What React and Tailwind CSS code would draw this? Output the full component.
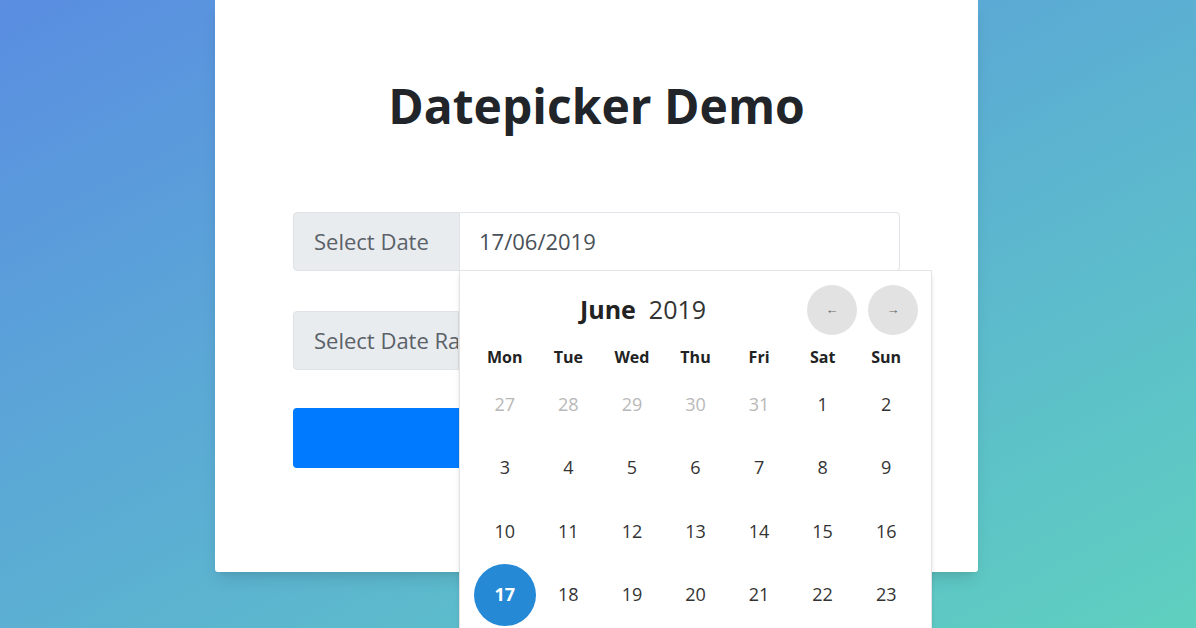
import React from 'react';

const weeks = [
  [
    { d: 27, muted: true },
    { d: 28, muted: true },
    { d: 29, muted: true },
    { d: 30, muted: true },
    { d: 31, muted: true },
    { d: 1 },
    { d: 2 },
  ],
  [3, 4, 5, 6, 7, 8, 9].map((d) => ({ d })),
  [10, 11, 12, 13, 14, 15, 16].map((d) => ({ d })),
  [17, 18, 19, 20, 21, 22, 23].map((d) => ({ d, selected: d === 17 })),
  [24, 25, 26, 27, 28, 29, 30].map((d) => ({ d })),
];

const weekdays = ['Mon', 'Tue', 'Wed', 'Thu', 'Fri', 'Sat', 'Sun'];

const Calendar = () => (
  <div className="absolute left-[166px] top-[58px] z-10 w-[473px] bg-white border border-[#e3e3e3] shadow-md px-[13px] pt-[14px] pb-4">
    {/* Header */}
    <div className="flex items-center">
      <div className="flex-1 flex items-center justify-center gap-[13px] text-[25px] text-[#333] pl-[6px]">
        <span className="font-bold text-[#222]">June</span>
        <span>2019</span>
      </div>
      <div className="flex gap-[11px]">
        <button className="w-[50px] h-[50px] rounded-full bg-[#e2e2e2] text-[#666] text-[13px] flex items-center justify-center">
          ←
        </button>
        <button className="w-[50px] h-[50px] rounded-full bg-[#e2e2e2] text-[#666] text-[13px] flex items-center justify-center">
          →
        </button>
      </div>
    </div>

    {/* Weekdays */}
    <div className="grid grid-cols-7 pt-[8px] h-[38px]">
      {weekdays.map((w) => (
        <div key={w} className="text-center text-[16px] font-bold text-[#222] leading-[28px]">
          {w}
        </div>
      ))}
    </div>

    {/* Days */}
    {weeks.map((week, i) => (
      <div key={i} className="grid grid-cols-7 h-[63.5px]">
        {week.map((c, j) => (
          <div key={j} className="flex items-center justify-center">
            {c.selected ? (
              <span className="w-[62px] h-[62px] rounded-full bg-[#2589d6] text-white font-bold text-[18px] flex items-center justify-center">
                {c.d}
              </span>
            ) : (
              <span className={`text-[18px] font-medium ${c.muted ? 'text-[#b8b8b8]' : 'text-[#333]'}`}>
                {c.d}
              </span>
            )}
          </div>
        ))}
      </div>
    ))}
  </div>
);

export default function App() {
  return (
    <div
      className="h-[628px] w-full overflow-hidden flex pl-[215px] bg-linear-to-br from-[#5a8de1] to-[#5fd0bf]"
      style={{ fontFamily: '"Open Sans", "Noto Sans", sans-serif' }}
    >
      {/* Card */}
      <div className="w-[763px] h-[572px] bg-white shadow-lg rounded-b-[3px] px-[78px]">
        <h1 className="mt-[77px] text-center text-[48px] leading-[1.2] font-bold text-[#212529]">
          Datepicker Demo
        </h1>

        <div className="mt-[77px] flex flex-col">
          {/* Select Date */}
          <div className="relative flex h-[59px]">
            <div className="w-[167px] shrink-0 flex items-center pl-[20px] bg-[#e9ecef] border border-[#dfe2e6] rounded-l-[4px] text-[22px] text-[#5a6168]">
              Select Date
            </div>
            <div className="flex-1 flex items-center pl-[19px] border border-l-0 border-[#e1e4e8] rounded-r-[4px] text-[22px] text-[#495057]">
              17/06/2019
            </div>
            <Calendar />
          </div>

          {/* Select Date Range (partly hidden under the open calendar) */}
          <div className="mt-[40px] flex h-[59px]">
            <div className="w-[166px] shrink-0 overflow-hidden flex items-center pl-[20px] bg-[#e9ecef] border border-[#dfe2e6] rounded-l-[4px] text-[22px] text-[#5a6168] whitespace-nowrap">
              Select Date Range
            </div>
            <div className="flex-1 border border-l-0 border-[#e1e4e8] rounded-r-[4px]" />
          </div>

          {/* Submit */}
          <button className="mt-[38px] h-[60px] w-full rounded-[4px] bg-[#007bff] text-white text-[22px]">
            Submit
          </button>
        </div>
      </div>
    </div>
  );
}
